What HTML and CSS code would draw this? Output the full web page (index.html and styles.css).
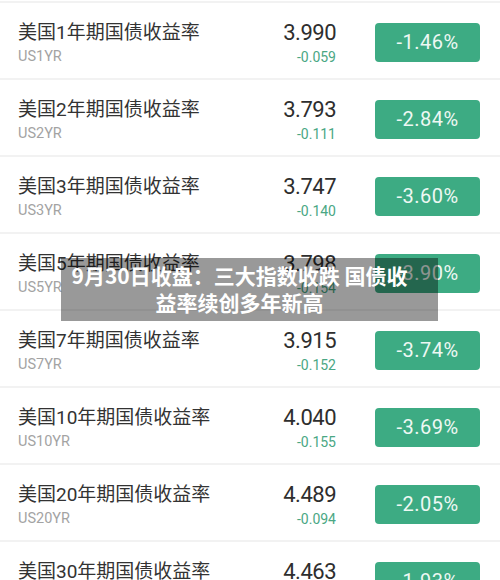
FILE: index.html
```html
<!DOCTYPE html>
<html lang="zh-CN">

<head>
    <meta charset="UTF-8">
    <meta name="viewport" content="width=device-width, initial-scale=1.0">
    <title>美国国债收益率</title>
    <link rel="stylesheet" href="styles.css">
</head>

<body>
    <div class="page">
        <ul class="bond-list">
            <li class="bond-row">
                <div class="bond-name">
                    <div class="title">美国1年期国债收益率</div>
                    <div class="code">US1YR</div>
                </div>
                <div class="bond-value">
                    <div class="price">3.990</div>
                    <div class="change">-0.059</div>
                </div>
                <div class="badge">-1.46%</div>
            </li>
            <li class="bond-row">
                <div class="bond-name">
                    <div class="title">美国2年期国债收益率</div>
                    <div class="code">US2YR</div>
                </div>
                <div class="bond-value">
                    <div class="price">3.793</div>
                    <div class="change">-0.111</div>
                </div>
                <div class="badge">-2.84%</div>
            </li>
            <li class="bond-row">
                <div class="bond-name">
                    <div class="title">美国3年期国债收益率</div>
                    <div class="code">US3YR</div>
                </div>
                <div class="bond-value">
                    <div class="price">3.747</div>
                    <div class="change">-0.140</div>
                </div>
                <div class="badge">-3.60%</div>
            </li>
            <li class="bond-row">
                <div class="bond-name">
                    <div class="title">美国5年期国债收益率</div>
                    <div class="code">US5YR</div>
                </div>
                <div class="bond-value">
                    <div class="price">3.798</div>
                    <div class="change">-0.154</div>
                </div>
                <div class="badge">-3.90%</div>
            </li>
            <li class="bond-row">
                <div class="bond-name">
                    <div class="title">美国7年期国债收益率</div>
                    <div class="code">US7YR</div>
                </div>
                <div class="bond-value">
                    <div class="price">3.915</div>
                    <div class="change">-0.152</div>
                </div>
                <div class="badge">-3.74%</div>
            </li>
            <li class="bond-row">
                <div class="bond-name">
                    <div class="title">美国10年期国债收益率</div>
                    <div class="code">US10YR</div>
                </div>
                <div class="bond-value">
                    <div class="price">4.040</div>
                    <div class="change">-0.155</div>
                </div>
                <div class="badge">-3.69%</div>
            </li>
            <li class="bond-row">
                <div class="bond-name">
                    <div class="title">美国20年期国债收益率</div>
                    <div class="code">US20YR</div>
                </div>
                <div class="bond-value">
                    <div class="price">4.489</div>
                    <div class="change">-0.094</div>
                </div>
                <div class="badge">-2.05%</div>
            </li>
            <li class="bond-row">
                <div class="bond-name">
                    <div class="title">美国30年期国债收益率</div>
                    <div class="code">US30YR</div>
                </div>
                <div class="bond-value">
                    <div class="price">4.463</div>
                    <div class="change">-0.088</div>
                </div>
                <div class="badge">-1.93%</div>
            </li>
        </ul>

        <!-- headline caption laid over the screenshot -->
        <div class="caption">9月30日收盘：三大指数收跌 国债收<br>益率续创多年新高</div>
    </div>
</body>

</html>
```

FILE: styles.css
```css
body {
    margin: 0;
    background: #ffffff;
    font-family: Roboto, "Noto Sans CJK SC", sans-serif;
}

.page {
    position: relative;
    height: 580px;
    overflow: hidden;
}

.bond-list {
    list-style: none;
    margin: 0;
    padding: 1px 0 0;
}

.bond-row {
    display: flex;
    align-items: flex-start;
    height: 75px;
    padding: 0 20px 0 18px;
    border-top: 2px solid #f2f2f2;
}

.bond-name {
    flex: 1;
    padding-top: 18px;
}

.title {
    font-size: 19px;
    line-height: 24px;
    color: #333333;
}

.code {
    margin-top: 2px;
    font-size: 14.5px;
    line-height: 20px;
    color: #a3a3a3;
}

.bond-value {
    padding-top: 17px;
    text-align: right;
}

.price {
    font-size: 22px;
    line-height: 26px;
    color: #2e2e2e;
    letter-spacing: -0.5px;
}

.change {
    margin-top: 2px;
    font-size: 14px;
    line-height: 18px;
    color: #4aa784;
}

.badge {
    width: 105px;
    height: 39px;
    margin-top: 20px;
    margin-left: 39px;
    border-radius: 4px;
    background: #3dab83;
    color: #eef8f3;
    font-size: 20px;
    line-height: 39px;
    text-align: center;
    letter-spacing: 0.5px;
}

.caption {
    position: absolute;
    top: 258px;
    left: 61px;
    width: 377px;
    height: 63px;
    box-sizing: border-box;
    padding: 4px 20px 0 0;
    background: rgba(0, 0, 0, 0.4);
    color: #ffffff;
    font-family: "Noto Sans CJK SC", sans-serif;
    font-size: 21px;
    font-weight: bold;
    line-height: 27px;
    text-align: center;
}
```
